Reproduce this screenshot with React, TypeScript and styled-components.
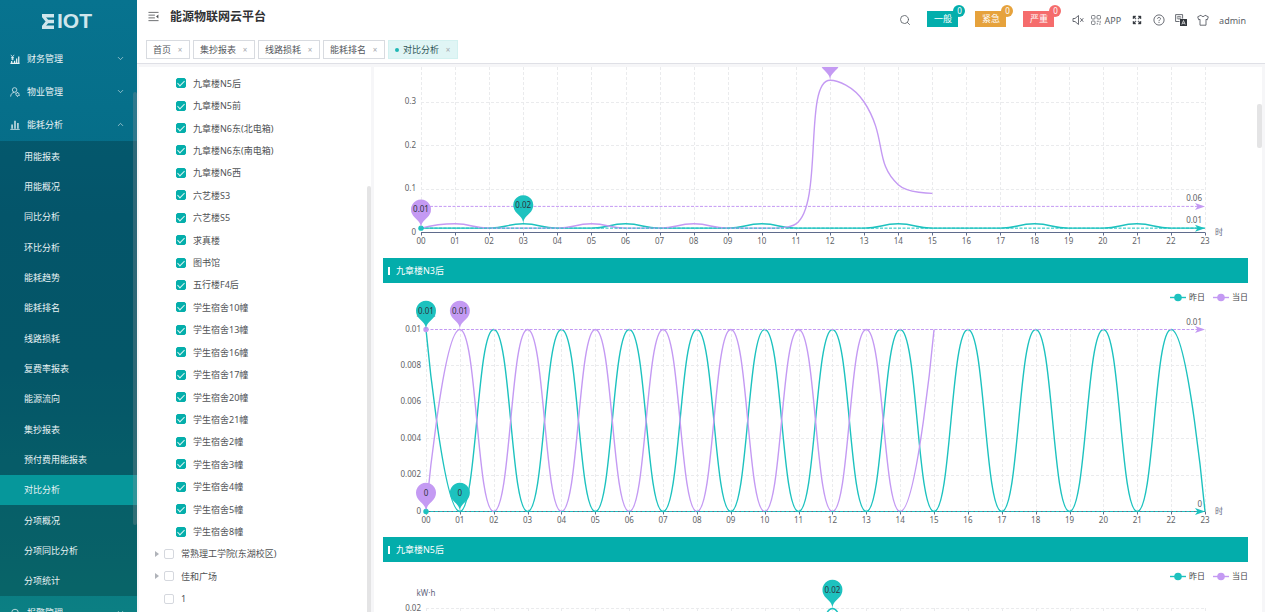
import React, { useLayoutEffect, useRef, useState } from "react";
import styled, { createGlobalStyle } from "styled-components";
import { ChevronDown, ChevronUp, Search } from "lucide-react";

const TEAL = "#1dc2bf";
const PURPLE = "#c49af3";
const FONT = '"Noto Sans", "Noto Sans CJK SC", sans-serif';

const GlobalStyle = createGlobalStyle`
  * { box-sizing: border-box; }
  body { margin: 0; font-family: ${FONT}; font-size: 9px; color: #505255; background: #f6f6f8; overflow: hidden; }
  button { font: inherit; color: inherit; border: 0; padding: 0; background: none; cursor: pointer; }
  a { color: inherit; text-decoration: none; }
`;

const Shell = styled.div`
  display: flex;
  height: 100vh;
  overflow: hidden;
`;

/* ---------- side bar ---------- */

const Sidebar = styled.aside`
  position: relative;
  flex: 0 0 137px;
  overflow: hidden;
  color: #e9f3f5;
  background: linear-gradient(180deg, #07738f 0%, #056b85 35%, #066c82 60%, #0b7f83 100%);
`;

const Logo = styled.div`
  display: flex;
  align-items: center;
  gap: 3px;
  height: 42px;
  padding-left: 42px;
  font: 700 21px/20px "Liberation Sans", sans-serif;
  color: #cfe6ec;
`;

const MenuItem = styled.button`
  display: flex;
  align-items: center;
  width: 100%;
  height: 33px;
  padding: 0 12px 0 10px;
  gap: 7px;
  text-align: left;
`;

const MenuLabel = styled.span`
  flex: 1;
`;

const SubMenu = styled.nav`
  display: grid;
  grid-auto-rows: 1fr;
  height: 455px;
  background: rgba(0, 0, 0, 0.2);
`;

const SubItem = styled.a<{ $active?: boolean }>`
  display: flex;
  align-items: center;
  padding-left: 24px;
  background: ${(p) => (p.$active ? "#06979b" : "transparent")};
`;

const Thumb = styled.div<{ $top: number; $height: string; $right: number; $color: string; $width: number }>`
  position: absolute;
  top: ${(p) => p.$top}px;
  right: ${(p) => p.$right}px;
  width: ${(p) => p.$width}px;
  height: ${(p) => p.$height};
  border-radius: 2px;
  background: ${(p) => p.$color};
`;

/* ---------- header ---------- */

const Main = styled.div`
  display: flex;
  flex: 1;
  flex-direction: column;
  min-width: 0;
`;

const Header = styled.header`
  flex: none;
  height: 64px;
  background: #fff;
  border-bottom: 1px solid #dfe0e6;
`;

const HeaderTop = styled.div`
  display: flex;
  align-items: center;
  height: 40px;
  padding: 0 19px 0 11px;
`;

const Title = styled.h1`
  flex: 1;
  margin: 0 0 6px 11px;
  font-size: 12px;
  line-height: 20px;
  font-weight: 600;
  color: #303133;
`;

const FoldButton = styled.button`
  display: flex;
  margin-bottom: 8px;
`;

const Tools = styled.div`
  display: flex;
  align-items: center;
  gap: 10px;
`;

const SoundGroup = styled.div`
  display: flex;
  align-items: center;
  gap: 7px;
`;

const AlarmGroup = styled.div`
  display: flex;
  gap: 17px;
  margin: 0 8px 0 6px;
`;

const IconButton = styled.button`
  display: flex;
  align-items: center;
  gap: 3px;
  color: #5a5e66;
`;

const Alarm = styled.button<{ $color: string }>`
  position: relative;
  width: 31px;
  height: 16px;
  line-height: 16px;
  margin-bottom: 2px;
  color: #fff;
  background: ${(p) => p.$color};
`;

const Badge = styled.span<{ $color: string }>`
  position: absolute;
  top: -6px;
  right: -7px;
  width: 12px;
  height: 12px;
  border-radius: 6px;
  font-size: 8px;
  line-height: 11px;
  background: ${(p) => p.$color};
`;

const Tabs = styled.nav`
  display: flex;
  gap: 3px;
  padding-left: 9px;
`;

const Tab = styled.div<{ $active?: boolean }>`
  display: flex;
  align-items: center;
  gap: 6px;
  height: 19px;
  padding: 0 6px;
  border: 1px solid ${(p) => (p.$active ? "#d3f1f0" : "#d8dbe0")};
  color: ${(p) => (p.$active ? "#2f5557" : "#55585d")};
  background: ${(p) => (p.$active ? "#e0f5f5" : "#fff")};
`;

const TabLink = styled.a`
  display: flex;
  align-items: center;
  gap: 4px;
`;

const Dot = styled.i`
  width: 4px;
  height: 4px;
  border-radius: 2px;
  background: #1fb8b5;
`;

const Close = styled.button`
  width: 6px;
  font-size: 8px;
  line-height: 10px;
  color: #a6a9ae;
`;

/* ---------- tree ---------- */

const Body = styled.div`
  display: flex;
  flex: 1;
  gap: 3px;
  min-height: 0;
  padding: 3px 3px 0 2px;
`;

const TreePanel = styled.section`
  position: relative;
  flex: 0 0 232px;
  overflow: hidden;
  padding-top: 5px;
  background: #fff;
`;

const Tree = styled.ul`
  display: grid;
  grid-auto-rows: 1fr;
  height: 538px;
  margin: 0;
  padding: 0 0 0 14px;
  list-style: none;
`;

const TreeRow = styled.li<{ $leaf?: boolean }>`
  display: flex;
  align-items: center;
  gap: 3px;
  padding-left: ${(p) => (p.$leaf ? 23 : 0)}px;
`;

const Caret = styled.button<{ $shown: boolean }>`
  display: flex;
  justify-content: center;
  width: 8px;
  visibility: ${(p) => (p.$shown ? "visible" : "hidden")};
`;

const TreeLabel = styled.label`
  display: flex;
  align-items: center;
  gap: 7px;
`;

const Check = styled.input`
  appearance: none;
  display: flex;
  justify-content: center;
  width: 10px;
  height: 10px;
  margin: 0;
  border: 1px solid #d5d8de;
  border-radius: 2px;
  background: #fff;

  &:checked {
    border-color: #04aeab;
    background: #04aeab;
  }

  &:checked::after {
    content: "";
    width: 3px;
    height: 6px;
    border: solid #d9f3f2;
    border-width: 0 1px 1px 0;
    transform: rotate(45deg);
  }
`;

/* ---------- charts ---------- */

const ChartPanel = styled.section`
  position: relative;
  flex: 1;
  min-width: 0;
  overflow: hidden;
  padding: 0 14px 0 9px;
  background: #fff;
`;

const ChartTitle = styled.h2`
  display: flex;
  align-items: center;
  gap: 6px;
  height: 25px;
  margin: 0;
  padding-left: 5px;
  font-size: 9px;
  font-weight: 400;
  color: #fff;
  background: #03adab;

  &::before {
    content: "";
    width: 2px;
    height: 8px;
    background: #fff;
  }
`;

const ChartSvg = styled.svg`
  display: block;
  width: 100%;
  overflow: hidden;
  font-family: ${FONT};
  font-size: 8px;
`;

type Pt = [number, number];

const clamp = (v: number, a: number, b: number) => Math.max(Math.min(v, Math.max(a, b)), Math.min(a, b));

/* Smoothed line whose control points never leave the span between neighbours. */
function smoothPath(pts: Pt[]): string {
  const s = 0.5;
  let d = `M${pts[0][0]},${pts[0][1]}`;
  let c0: Pt = pts[0];
  for (let i = 1; i < pts.length; i++) {
    const [px, py] = pts[i - 1];
    const [x, y] = pts[i];
    let c1: Pt = [x, y];
    let next: Pt = [x, y];
    if (i < pts.length - 1) {
      const [nx, ny] = pts[i + 1];
      const lp = Math.hypot(x - px, y - py);
      const ln = Math.hypot(nx - x, ny - y);
      const r = ln / (ln + lp);
      const ax = clamp(x + (nx - px) * s * r, nx, x);
      const ay = clamp(y + (ny - py) * s * r, ny, y);
      c1 = [clamp(x - ((ax - x) * lp) / ln, px, x), clamp(y - ((ay - y) * lp) / ln, py, y)];
      next = [x + ((x - c1[0]) * ln) / lp, y + ((y - c1[1]) * ln) / lp];
    }
    d += `C${c0[0]},${c0[1]} ${c1[0]},${c1[1]} ${x},${y}`;
    c0 = next;
  }
  return d;
}

function Pin({ x, y, color, text }: { x: number; y: number; color: string; text: string }) {
  return (
    <g transform={`translate(${x} ${y})`}>
      <path d="M-9,-14.3A10,10 0 1 1 9,-14.3C6.4,-8.9 0,-7 0,0C0,-7 -6.4,-8.9 -9,-14.3Z" fill={color} />
      <text y={-16} textAnchor="middle" fill="#2d3440">{text}</text>
    </g>
  );
}

interface Mark { value: number; color: string; label: string }
interface PinData { hour: number; value: number; color: string; label: string }
interface ChartProps {
  height: number;
  left: number;
  zero: number;
  scale: number;
  gridTop: number;
  ticks: [number, string][];
  yesterday: number[];
  today: number[];
  marks: Mark[];
  pins: PinData[];
  legend?: boolean;
}

const HOURS = Array.from({ length: 24 }, (_, i) => String(i).padStart(2, "0"));

function LineChart(p: ChartProps) {
  const ref = useRef<SVGSVGElement>(null);
  const [w, setW] = useState(865);
  useLayoutEffect(() => {
    const el = ref.current!;
    const measure = () => setW(el.getBoundingClientRect().width);
    measure();
    const ro = new ResizeObserver(measure);
    ro.observe(el);
    return () => ro.disconnect();
  }, []);
  const right = w - 43;
  const X = (i: number) => p.left + ((right - p.left) * i) / 23;
  const Y = (v: number) => p.zero - v * p.scale;
  const line = (vals: number[]) => smoothPath(vals.map((v, i) => [X(i), Y(v)] as Pt));
  const marked = p.marks.map((m) => m.value);
  const axisShown = p.zero < p.height;
  return (
    <ChartSvg ref={ref} height={p.height} role="img">
      <g stroke="#eaebed" strokeDasharray="3 2">
        {HOURS.map((h, i) => {
          const gx = Math.round(X(i)) + 0.5;
          return <line key={h} x1={gx} x2={gx} y1={p.gridTop} y2={p.zero} />;
        })}
        {p.ticks.filter(([v]) => v > 0 && !marked.includes(v)).map(([v]) => (
          <line key={v} x1={p.left} x2={right} y1={Math.floor(Y(v)) + 0.5} y2={Math.floor(Y(v)) + 0.5} />
        ))}
      </g>
      <g fill="#606266" textAnchor="end">
        {p.ticks.map(([v, t]) => <text key={t} x={p.left - 5} y={Y(v) + 2}>{t}</text>)}
      </g>
      {axisShown && (
        <>
          <g stroke="#5f6b8c">
            <line x1={p.left} x2={right} y1={p.zero} y2={p.zero} />
            {HOURS.map((h, i) => {
              const tx = Math.round(X(i)) + 0.5;
              return <line key={h} x1={tx} x2={tx} y1={p.zero} y2={p.zero + 3} />;
            })}
          </g>
          <g fill="#606266" textAnchor="middle">
            {HOURS.map((h, i) => <text key={h} x={X(i)} y={p.zero + 11}>{h}</text>)}
          </g>
          <text x={right + 10} y={p.zero + 2} fill="#5f6780">时</text>
        </>
      )}
      {p.legend && (
        <>
          <text x={p.left} y={34} textAnchor="middle" fill="#5f6780">kW·h</text>
          {([["昨日", TEAL, 43], ["当日", PURPLE, 0]] as [string, string, number][]).map(([t, c, off]) => (
            <g key={t}>
              <line x1={w - off - 35} x2={w - off - 19} y1={14.5} y2={14.5} stroke={c} strokeWidth={1.4} />
              <circle cx={w - off - 27} cy={14.5} r={3.8} fill={c} />
              <text x={w - off - 16} y={17} fill="#404246">{t}</text>
            </g>
          ))}
        </>
      )}
      <g fill="none" strokeWidth={1.4}>
        <path d={line(p.yesterday)} stroke={TEAL} />
        <path d={line(p.today)} stroke={PURPLE} />
      </g>
      {p.marks.map((m) => (
        <g key={m.label} fill={m.color}>
          <line x1={p.left} x2={right - 4} y1={Y(m.value)} y2={Y(m.value)} stroke={m.color} strokeDasharray="3 1.5" />
          <circle cx={p.left} cy={Y(m.value)} r={2.7} />
          <path d={`M${right},${Y(m.value)}l-10,-3.5l2.5,3.5l-2.5,3.5z`} />
          <text x={right - 3} y={Y(m.value) - 5} textAnchor="end" fill="#606266">{m.label}</text>
        </g>
      ))}
      {p.pins.map((n, i) => (
        <Pin key={i} x={X(n.hour)} y={Y(n.value)} color={n.color} text={n.label} />
      ))}
    </ChartSvg>
  );
}

const n2Yesterday = HOURS.map((_, i) => ([3, 6, 10, 14, 18, 21].includes(i) ? 0.02 : 0.01));
const n2Today = [0.01, 0.02, 0.01, 0.01, 0.01, 0.02, 0.01, 0.01, 0.02, 0.01, 0.01, 0.02, 0.35, 0.3, 0.11, 0.09];
const n3Yesterday = HOURS.map((_, i) => (i % 2 ? 0 : 0.01));
const n3Today = HOURS.slice(0, 16).map((_, i) => (i % 2 ? 0.01 : 0));
const n5Yesterday = HOURS.map((_, i) => (i === 12 ? 0.02 : 0.01));
const n5Today = HOURS.slice(0, 16).map(() => 0.01);

/* ---------- icons ---------- */

const Svg = ({ size = 12, children }: { size?: number; children: React.ReactNode }) => (
  <svg width={size} height={size} viewBox="0 0 12 12" fill="none" stroke="currentColor" strokeWidth={0.9} aria-hidden>
    {children}
  </svg>
);

const FinanceIcon = () => (
  <Svg size={10}>
    <path d="M1 1l2 2.5L5 1M3 3.500v4M1.200 4.200h3.600M1.200 6h3.600" />
    <path d="M.5 11.200h11M2 8.500v2.700M5.500 8v3M8 5.500v5.500M10.500 3v8" strokeWidth={1.5} />
  </Svg>
);
const PropertyIcon = () => (
  <Svg size={10}>
    <circle cx="5.500" cy="3.500" r="2.700" />
    <path d="M.8 11.500c0-3 2-5 4.400-5" />
    <circle cx="9" cy="8.800" r="1.900" />
    <path d="M9 6v1M9 10.700v1M6.500 7.400l.9.500M10.700 9.800l.9.500" />
  </Svg>
);
const EnergyIcon = () => (
  <Svg size={10}>
    <path d="M.3 11.300h11.400" />
    <path d="M2.500 10.500V5.500M6 10.500V1M9.500 10.500V3.500" strokeWidth={1.6} />
  </Svg>
);
const AlarmIcon = () => (
  <Svg size={10}>
    <path d="M2 10V5.500a4 4 0 0 1 8 0V10M.5 10.500h11" />
  </Svg>
);
const FoldIcon = () => (
  <Svg size={11}>
    <path d="M.5 1.500h11M.5 4.500h7M.5 7.500h7M.5 10.500h11" />
    <path d="M11.300 3.800v4.400L8.800 6z" fill="currentColor" stroke="none" />
  </Svg>
);
const MuteIcon = () => (
  <Svg>
    <path d="M1 4.500h2L6.500 1.500v9L3 7.500H1zM8.300 4.200l3 3.600M11.300 4.200l-3 3.600" />
  </Svg>
);
const QrIcon = () => (
  <Svg size={10}>
    <rect x=".6" y=".6" width="4.200" height="4.200" rx="1" />
    <rect x="7.200" y=".6" width="4.200" height="4.200" rx="1" />
    <rect x=".6" y="7.200" width="4.200" height="4.200" rx="1" />
    <path d="M7 7.500h2.500M11 7v2.500M7.500 9.500v2M9.500 11h2" />
  </Svg>
);
const FullIcon = () => (
  <Svg>
    <path d="M2.500 2.500l2.500 2.500M9.500 2.500L7 5M2.500 9.500L5 7M9.500 9.500L7 7" strokeWidth={1.300} />
    <path d="M2 5V2h3zM10 5V2H7zM2 7V10h3zM10 7V10H7z" fill="#33373d" stroke="#33373d" strokeWidth={0.4} />
  </Svg>
);
const HelpIcon = () => (
  <Svg>
    <circle cx="6" cy="6" r="5.100" />
    <path d="M4.500 4.800C4.500 3 7.500 3 7.500 4.700C7.500 5.800 6 5.800 6 7.200M6 8v1" />
  </Svg>
);
const LangIcon = () => (
  <Svg>
    <path d="M4.500 7.500H.6V.6h7v4" />
    <path d="M2.300 2.500h3.500v2.300H2.300zM4 1.800v4" strokeWidth={0.6} />
    <rect x="5" y="5" width="7" height="7" fill="#33373d" stroke="none" />
    <path d="M6.800 10.500l1.700-4l1.700 4M7.400 9.300h2.200" stroke="#fff" strokeWidth={0.7} />
  </Svg>
);
const ShirtIcon = () => (
  <Svg>
    <path d="M4 1.200L.7 2.800l1 3L3 5.300v5.900h6V5.300l1.300.5l1-3L8 1.200C7.500 3 4.500 3 4 1.200z" />
  </Svg>
);

/* ---------- content ---------- */

const subItems = [
  "用能报表", "用能概况", "同比分析", "环比分析", "能耗趋势", "能耗排名", "线路损耗", "复费率报表",
  "能源流向", "集抄报表", "预付费用能报表", "对比分析", "分项概况", "分项同比分析", "分项统计",
];
const leaves = [
  "九章楼N5后", "九章楼N5前", "九章楼N6东(北电箱)", "九章楼N6东(南电箱)", "九章楼N6西", "六艺楼S3", "六艺楼S5",
  "求真楼", "图书馆", "五行楼F4后", "学生宿舍10幢", "学生宿舍13幢", "学生宿舍16幢", "学生宿舍17幢",
  "学生宿舍20幢", "学生宿舍21幢", "学生宿舍2幢", "学生宿舍3幢", "学生宿舍4幢", "学生宿舍5幢", "学生宿舍8幢",
];
const roots: [string, boolean][] = [["常熟理工学院(东湖校区)", true], ["佳和广场", true], ["1", false]];
const tabs = ["首页", "集抄报表", "线路损耗", "能耗排名", "对比分析"];
const alarms = [["一般", "#03aeac"], ["紧急", "#e6a23c"], ["严重", "#f56c6c"]];

export default function App() {
  return (
    <Shell>
      <GlobalStyle />
      <Sidebar>
        <Logo>
          <svg width="12" height="15" viewBox="0 0 12 15" fill="none" stroke="currentColor" aria-hidden>
            <path d="M0 1.700h12M0 13.300h12M5 7.500h7" strokeWidth="3.400" />
            <path d="M1.500 2.500l4 5l-4 5" strokeWidth="3" />
          </svg>
          IOT
        </Logo>
        <MenuItem><FinanceIcon /><MenuLabel>财务管理</MenuLabel><ChevronDown size={9} strokeWidth={1.5} /></MenuItem>
        <MenuItem><PropertyIcon /><MenuLabel>物业管理</MenuLabel><ChevronDown size={9} strokeWidth={1.5} /></MenuItem>
        <MenuItem><EnergyIcon /><MenuLabel>能耗分析</MenuLabel><ChevronUp size={9} strokeWidth={1.5} /></MenuItem>
        <SubMenu>
          {subItems.map((t) => <SubItem key={t} href="#" $active={t === "对比分析"}>{t}</SubItem>)}
        </SubMenu>
        <MenuItem><AlarmIcon /><MenuLabel>报警管理</MenuLabel><ChevronDown size={9} strokeWidth={1.5} /></MenuItem>
        <Thumb $top={92} $height="433px" $right={0} $width={4} $color="rgba(144,147,153,0.3)" />
      </Sidebar>
      <Main>
        <Header>
          <HeaderTop>
            <FoldButton aria-label="menu"><FoldIcon /></FoldButton>
            <Title>能源物联网云平台</Title>
            <Tools>
              <IconButton aria-label="search"><Search size={12} strokeWidth={1.7} /></IconButton>
              <AlarmGroup>
                {alarms.map(([t, c]) => (
                  <Alarm key={t} $color={c}>{t}<Badge $color={c}>0</Badge></Alarm>
                ))}
              </AlarmGroup>
              <SoundGroup>
                <IconButton aria-label="mute"><MuteIcon /></IconButton>
                <IconButton><QrIcon />APP</IconButton>
              </SoundGroup>
              <IconButton aria-label="fullscreen"><FullIcon /></IconButton>
              <IconButton aria-label="help"><HelpIcon /></IconButton>
              <IconButton aria-label="language"><LangIcon /></IconButton>
              <IconButton aria-label="theme"><ShirtIcon /></IconButton>
              <IconButton>admin</IconButton>
            </Tools>
          </HeaderTop>
          <Tabs>
            {tabs.map((t) => {
              const active = t === "对比分析";
              return (
                <Tab key={t} $active={active}>
                  <TabLink href="#">{active && <Dot />}{t}</TabLink>
                  <Close>×</Close>
                </Tab>
              );
            })}
          </Tabs>
        </Header>
        <Body>
          <TreePanel>
            <Tree>
              {leaves.map((t) => (
                <TreeRow key={t} $leaf>
                  <TreeLabel><Check type="checkbox" defaultChecked />{t}</TreeLabel>
                </TreeRow>
              ))}
              {roots.map(([t, open]) => (
                <TreeRow key={t}>
                  <Caret $shown={open} aria-label="expand">
                    <svg width="4" height="6" viewBox="0 0 4 6" aria-hidden><path d="M0 0l4 3l-4 3z" fill="#b0b3b9" /></svg>
                  </Caret>
                  <TreeLabel><Check type="checkbox" />{t}</TreeLabel>
                </TreeRow>
              ))}
            </Tree>
            <Thumb $top={119} $height="100%" $right={0} $width={4} $color="#e4e4e5" />
          </TreePanel>
          <ChartPanel>
            <LineChart
              height={191} left={38} zero={165.5} scale={435} gridTop={-20}
              ticks={[[0, "0"], [0.1, "0.1"], [0.2, "0.2"], [0.3, "0.3"]]}
              yesterday={n2Yesterday} today={n2Today}
              marks={[{ value: 0.06, color: PURPLE, label: "0.06" }, { value: 0.01, color: TEAL, label: "0.01" }]}
              pins={[
                { hour: 3, value: 0.02, color: TEAL, label: "0.02" },
                { hour: 0, value: 0.01, color: PURPLE, label: "0.01" },
                { hour: 12, value: 0.35, color: PURPLE, label: "" },
              ]}
            />
            <ChartTitle>九章楼N3后</ChartTitle>
            <LineChart
              height={254} left={43} zero={228.5} scale={18200} gridTop={46} legend
              ticks={[[0, "0"], [0.002, "0.002"], [0.004, "0.004"], [0.006, "0.006"], [0.008, "0.008"], [0.01, "0.01"]]}
              yesterday={n3Yesterday} today={n3Today}
              marks={[{ value: 0.01, color: PURPLE, label: "0.01" }, { value: 0, color: TEAL, label: "0" }]}
              pins={[
                { hour: 0, value: 0.01, color: TEAL, label: "0.01" },
                { hour: 1, value: 0, color: TEAL, label: "0" },
                { hour: 1, value: 0.01, color: PURPLE, label: "0.01" },
                { hour: 0, value: 0, color: PURPLE, label: "0" },
              ]}
            />
            <ChartTitle>九章楼N5后</ChartTitle>
            <LineChart
              height={50} left={43} zero={228.5} scale={9100} gridTop={46} legend
              ticks={[[0.02, "0.02"]]}
              yesterday={n5Yesterday} today={n5Today}
              marks={[]}
              pins={[{ hour: 12, value: 0.02, color: TEAL, label: "0.02" }]}
            />
            <Thumb $top={37} $height="44px" $right={0} $width={5} $color="#e4e4e5" />
          </ChartPanel>
        </Body>
      </Main>
    </Shell>
  );
}
